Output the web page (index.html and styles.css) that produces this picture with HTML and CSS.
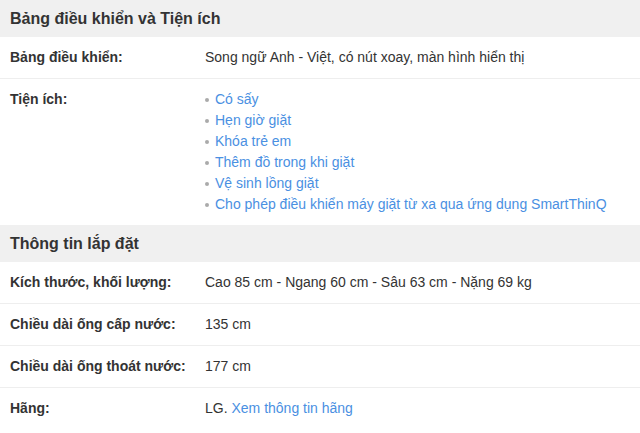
FILE: index.html
```html
<!DOCTYPE html>
<html lang="vi">
<head>
<meta charset="utf-8">
<link rel="stylesheet" href="styles.css">
</head>
<body>
<div class="specs">
  <h3 class="group">Bảng điều khiển và Tiện ích</h3>
  <div class="row">
    <div class="label">Bảng điều khiển:</div>
    <div class="value">Song ngữ Anh - Việt, có nút xoay, màn hình hiển thị</div>
  </div>
  <div class="row last">
    <div class="label">Tiện ích:</div>
    <ul class="value list">
      <li><a href="#">Có sấy</a></li>
      <li><a href="#">Hẹn giờ giặt</a></li>
      <li><a href="#">Khóa trẻ em</a></li>
      <li><a href="#">Thêm đồ trong khi giặt</a></li>
      <li><a href="#">Vệ sinh lồng giặt</a></li>
      <li><a href="#">Cho phép điều khiển máy giặt từ xa qua ứng dụng SmartThinQ</a></li>
    </ul>
  </div>
  <h3 class="group">Thông tin lắp đặt</h3>
  <div class="row">
    <div class="label">Kích thước, khối lượng:</div>
    <div class="value">Cao 85 cm - Ngang 60 cm - Sâu 63 cm - Nặng 69 kg</div>
  </div>
  <div class="row">
    <div class="label">Chiều dài ống cấp nước:</div>
    <div class="value">135 cm</div>
  </div>
  <div class="row">
    <div class="label">Chiều dài ống thoát nước:</div>
    <div class="value">177 cm</div>
  </div>
  <div class="row last">
    <div class="label">Hãng:</div>
    <div class="value">LG. <a href="#">Xem thông tin hãng</a></div>
  </div>
</div>
</body>
</html>
```
FILE: styles.css
```css
html, body {
  margin: 0;
  padding: 0;
  background: #fff;
}
body {
  font-family: "Liberation Sans", Arial, sans-serif;
  font-size: 14px;
  color: #333;
}
.specs {
  width: 640px;
}
.group {
  margin: 0;
  background: #f0f0f0;
  font-size: 16px;
  font-weight: bold;
  line-height: 21px;
  padding: 8px 10px;
  color: #333;
}
.row {
  display: grid;
  grid-template-columns: 195px 1fr;
  padding: 10px 0 10px 10px;
  line-height: 21px;
  border-bottom: 1px solid #eee;
}
.row.last {
  border-bottom: none;
}
.label {
  font-weight: bold;
}
.list {
  list-style: none;
  margin: 0;
  padding: 0;
}
.list li {
  display: flex;
  align-items: center;
}
.list li::before {
  content: "";
  width: 4px;
  height: 4px;
  border-radius: 50%;
  background: #aaa;
  margin-right: 6px;
  flex: none;
}
a {
  color: #4a90e2;
  text-decoration: none;
}
```
